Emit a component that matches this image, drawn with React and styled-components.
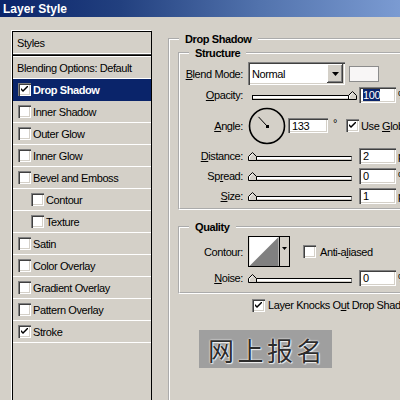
import React from "react";
import styled, { createGlobalStyle } from "styled-components";

const Global = createGlobalStyle`
  html, body { margin: 0; padding: 0; background: #d4d0c8; }
`;

const Window = styled.div`
  width: 400px;
  height: 400px;
  overflow: hidden;
  background: #d4d0c8;
  font-family: "Liberation Sans", Arial, sans-serif;
  font-size: 11px;
  letter-spacing: -0.4px;
  color: #000;
  display: flex;
  flex-direction: column;
`;

const TitleBar = styled.div`
  height: 17px;
  flex: none;
  background: linear-gradient(to right, #0a246a 0%, #22407f 30%, #5273ad 65%, #7b9bd2 100%);
  display: flex;
  align-items: center;
  padding-left: 3px;
`;

const Title = styled.span`
  color: #fff;
  font-weight: bold;
  font-size: 12px;
  letter-spacing: 0;
`;

const Body = styled.div`
  display: flex;
  align-items: flex-start;
  flex: 1;
`;

const StylesList = styled.div`
  margin: 14px 0 0 12px;
  width: 140px;
  height: 420px;
  flex: none;
  box-sizing: border-box;
  border: 1px solid #000;
  box-shadow: -1px -1px 0 #fff;
  display: flex;
  flex-direction: column;
`;

const ListRow = styled.div`
  height: 22px;
  flex: none;
  box-sizing: border-box;
  border-bottom: 1px solid ${(p) => (p.$selected ? "#0a246a" : "#fff")};
  background: ${(p) => (p.$selected ? "#0a246a" : "transparent")};
  color: ${(p) => (p.$selected ? "#fff" : "#000")};
  font-weight: ${(p) => (p.$selected ? "bold" : "normal")};
  display: flex;
  align-items: center;
  gap: 2px;
  padding-left: ${(p) => p.$pad}px;
  white-space: nowrap;
`;

const ListDivider = styled.div`
  height: 3px;
  flex: none;
  box-sizing: border-box;
  border-top: 1px solid #404040;
  border-bottom: 1px solid #fff;
  background: #000;
`;

const CheckBox = styled.span`
  width: 13px;
  height: 13px;
  flex: none;
  box-sizing: border-box;
  background: #fff;
  box-shadow: inset 1px 1px 0 #808080, inset 2px 2px 0 #404040,
    inset -1px -1px 0 #fff, inset -2px -2px 0 #d4d0c8;
  display: flex;
  align-items: center;
  justify-content: center;
`;

const Check = ({ checked }) => (
  <CheckBox>
    {checked && (
      <svg width="7" height="7" viewBox="0 0 7 7">
        <path d="M0 2 L0 4 L2 6 L7 1 L7 -1 L2 4 Z" fill="#000" />
      </svg>
    )}
  </CheckBox>
);

const Settings = styled.div`
  margin-left: 16px;
  margin-top: 15px;
  flex: none;
`;

const GroupBox = styled.fieldset`
  margin: ${(p) => p.$mt || 0}px 0 0 0;
  padding: 0 0 ${(p) => p.$pb || 0}px ${(p) => p.$pl || 0}px;
  border: 2px groove #fff;
  width: ${(p) => p.$w}px;
  min-height: ${(p) => p.$minh || 0}px;
  box-sizing: border-box;
  min-width: 0;
`;

const Legend = styled.legend`
  font-weight: bold;
  line-height: 14px;
  padding: 0 6px;
  margin-left: ${(p) => p.$ml}px;
`;

const FieldRow = styled.div`
  display: flex;
  align-items: center;
  height: ${(p) => p.$h}px;
  margin-top: ${(p) => p.$mt || 0}px;
  margin-left: ${(p) => p.$ml || 0}px;
  white-space: nowrap;
`;

const Label = styled.span`
  width: 63px;
  flex: none;
  text-align: right;
  margin-right: 5px;
  white-space: nowrap;
`;

const Sunken = `
  box-sizing: border-box;
  background: #fff;
  box-shadow: inset 1px 1px 0 #808080, inset 2px 2px 0 #404040,
    inset -1px -1px 0 #fff, inset -2px -2px 0 #d4d0c8;
`;

const Select = styled.div`
  ${Sunken}
  width: 97px;
  height: 23px;
  flex: none;
  display: flex;
  align-items: center;
  padding: 2px 2px 2px 4px;
`;

const SelectText = styled.span`
  flex: 1;
`;

const DropButton = styled.span`
  width: 16px;
  height: 19px;
  flex: none;
  box-sizing: border-box;
  background: #d4d0c8;
  box-shadow: inset -1px -1px 0 #404040, inset 1px 1px 0 #fff,
    inset -2px -2px 0 #808080;
  display: flex;
  align-items: center;
  justify-content: center;
`;

const Swatch = styled.span`
  width: 30px;
  height: 16px;
  flex: none;
  box-sizing: border-box;
  margin-left: 4px;
  border: 1px solid #8c8c8c;
  background: #f8f6f6;
`;

const InputBox = styled.div`
  ${Sunken}
  width: ${(p) => p.$w || 37}px;
  height: ${(p) => p.$h || 16}px;
  flex: none;
  display: flex;
  align-items: center;
  padding-left: 4px;
  margin-left: ${(p) => p.$ml || 0}px;
`;

const Selected = styled.span`
  background: #0a246a;
  color: #fff;
  line-height: 12px;
`;

const Unit = styled.span`
  margin-left: 2px;
`;

const SliderWrap = styled.div`
  position: relative;
  width: 111px;
  height: 10px;
  flex: none;
  box-sizing: border-box;
  padding-left: 4px;
  display: flex;
  align-items: flex-end;
`;

const Track = styled.div`
  width: 100px;
  height: 5px;
  box-sizing: border-box;
  border: 1px solid #000;
  border-right-color: #808080;
  background: linear-gradient(#fff 0 60%, #d4d0c8 60%);
`;

const Thumb = styled.svg`
  position: absolute;
  bottom: 0;
`;

const Slider = ({ value }) => (
  <SliderWrap>
    <Track />
    <Thumb width="9" height="9" viewBox="0 0 9 9" style={{ left: `${value}px` }}>
      <path d="M0.5 8.5 L0.5 4.5 L4.5 0.5 L8.5 4.5 L8.5 8.5 Z" fill="#d4d0c8" stroke="#000" />
      <path d="M1.5 7.5 L1.5 4.9 L4.5 1.9" fill="none" stroke="#fff" />
    </Thumb>
  </SliderWrap>
);

const Dial = styled.svg`
  flex: none;
`;

const Degree = styled.span`
  margin-left: 5px;
  align-self: flex-start;
  margin-top: 12px;
`;

const CheckLabel = styled.span`
  display: flex;
  align-items: center;
  gap: ${(p) => p.$gap || 3}px;
  margin-left: ${(p) => p.$ml || 0}px;
  white-space: nowrap;
`;

const Text = styled.span`
  white-space: nowrap;
`;

const ContourPicker = styled.div`
  width: 42px;
  height: 31px;
  flex: none;
  box-sizing: border-box;
  border: 1px solid #000;
  display: flex;
`;

const ContourPreview = styled.svg`
  flex: none;
  border-right: 1px solid #000;
`;

const ContourArrow = styled.div`
  flex: 1;
  background: #d4d0c8;
  display: flex;
  justify-content: center;
  padding-top: 10px;
`;

const ChineseButton = styled.div`
  margin: 15px 0 0 21px;
  width: 133px;
  height: 38px;
  background: #9f9f9f;
  display: flex;
  align-items: center;
  padding-left: 9px;
  box-sizing: border-box;
  font-family: "Noto Sans CJK SC", sans-serif;
  font-size: 26px;
  letter-spacing: 3.5px;
  color: #2c2c2c;
  text-shadow: 0 0 1px #fff, 0 0 2px #fff, 1px 1px 1px #e8e8e8;
  white-space: nowrap;
`;

const styleItems = [
  { name: "Drop Shadow", checked: true, selected: true },
  { name: "Inner Shadow" },
  { name: "Outer Glow" },
  { name: "Inner Glow" },
  { name: "Bevel and Emboss" },
  { name: "Contour", indent: true },
  { name: "Texture", indent: true },
  { name: "Satin" },
  { name: "Color Overlay" },
  { name: "Gradient Overlay" },
  { name: "Pattern Overlay" },
  { name: "Stroke", checked: true },
];

const sliders = [
  { pre: "", u: "D", post: "istance:", input: "2", unit: "px" },
  { pre: "Sp", u: "r", post: "ead:", input: "0", unit: "%" },
  { pre: "", u: "S", post: "ize:", input: "1", unit: "px" },
];

const Down = ({ w = 7, h = 4 }) => (
  <svg width={w} height={h} viewBox={`0 0 ${w} ${h}`}>
    <path d={`M0 0 L${w} 0 L${w / 2} ${h} Z`} fill="#000" />
  </svg>
);

export default function App() {
  const a = (133 * Math.PI) / 180;
  const ex = 19 + 12.5 * Math.cos(a);
  const ey = 19 - 12.5 * Math.sin(a);
  return (
    <Window>
      <Global />
      <TitleBar>
        <Title>Layer Style</Title>
      </TitleBar>
      <Body>
        <StylesList>
          <ListRow $pad={4}>Styles</ListRow>
          <ListDivider />
          <ListRow $pad={4}>Blending Options: Default</ListRow>
          {styleItems.map((it) => (
            <ListRow key={it.name} $pad={it.indent ? 18 : 5} $selected={it.selected}>
              <Check checked={it.checked} />
              {it.name}
            </ListRow>
          ))}
        </StylesList>
        <Settings>
          <GroupBox $w={260} $pl={8} $minh={420}>
            <Legend $ml={1}>Drop Shadow</Legend>
            <GroupBox $w={252} $pb={2}>
              <Legend $ml={9}>Structure</Legend>
              <FieldRow $h={23} $mt={2}>
                <Label>
                  <u>B</u>lend Mode:
                </Label>
                <Select>
                  <SelectText>Normal</SelectText>
                  <DropButton>
                    <Down />
                  </DropButton>
                </Select>
                <Swatch />
              </FieldRow>
              <FieldRow $h={20}>
                <Label>
                  <u>O</u>pacity:
                </Label>
                <Slider value={100} />
                <InputBox>
                  <Selected>100</Selected>
                </InputBox>
                <Unit>%</Unit>
              </FieldRow>
              <FieldRow $h={41}>
                <Label>
                  <u>A</u>ngle:
                </Label>
                <Dial width="38" height="38" viewBox="0 0 38 38">
                  <circle cx="19" cy="19" r="17.5" fill="none" stroke="#000" strokeWidth="1.6" />
                  <line x1="19" y1="19" x2={ex} y2={ey} stroke="#000" strokeWidth="1" />
                  <rect x="18" y="18" width="3" height="3" fill="#000" />
                </Dial>
                <InputBox $w={40} $h={15} $ml={2}>
                  133
                </InputBox>
                <Degree>°</Degree>
                <CheckLabel $ml={9} $gap={2}>
                  <Check checked />
                  <Text>
                    Use <u>G</u>lobal Light
                  </Text>
                </CheckLabel>
              </FieldRow>
              {sliders.map((s) => (
                <FieldRow $h={20} key={s.post}>
                  <Label>
                    {s.pre}
                    <u>{s.u}</u>
                    {s.post}
                  </Label>
                  <Slider value={0} />
                  <InputBox>{s.input}</InputBox>
                  <Unit>{s.unit}</Unit>
                </FieldRow>
              ))}
            </GroupBox>
            <GroupBox $w={252} $pb={4} $mt={10}>
              <Legend $ml={9}>Quality</Legend>
              <FieldRow $h={31} $mt={2}>
                <Label>Contour:</Label>
                <ContourPicker>
                  <ContourPreview width="30" height="29" viewBox="0 0 29 29">
                    <rect width="29" height="29" fill="#fff" />
                    <path d="M0 29 L29 0 L29 29 Z" fill="#808080" />
                  </ContourPreview>
                  <ContourArrow>
                    <Down w={5} h={3} />
                  </ContourArrow>
                </ContourPicker>
                <CheckLabel $ml={13} $gap={4}>
                  <Check />
                  <Text>
                    Anti-a<u>l</u>iased
                  </Text>
                </CheckLabel>
              </FieldRow>
              <FieldRow $h={20} $mt={1}>
                <Label>
                  <u>N</u>oise:
                </Label>
                <Slider value={0} />
                <InputBox>0</InputBox>
                <Unit>%</Unit>
              </FieldRow>
            </GroupBox>
            <FieldRow $h={20} $mt={1} $ml={74}>
              <CheckLabel $gap={3}>
                <Check checked />
                <Text>
                  Layer Knocks O<u>u</u>t Drop Shadow
                </Text>
              </CheckLabel>
            </FieldRow>
            <ChineseButton>网上报名</ChineseButton>
          </GroupBox>
        </Settings>
      </Body>
    </Window>
  );
}
